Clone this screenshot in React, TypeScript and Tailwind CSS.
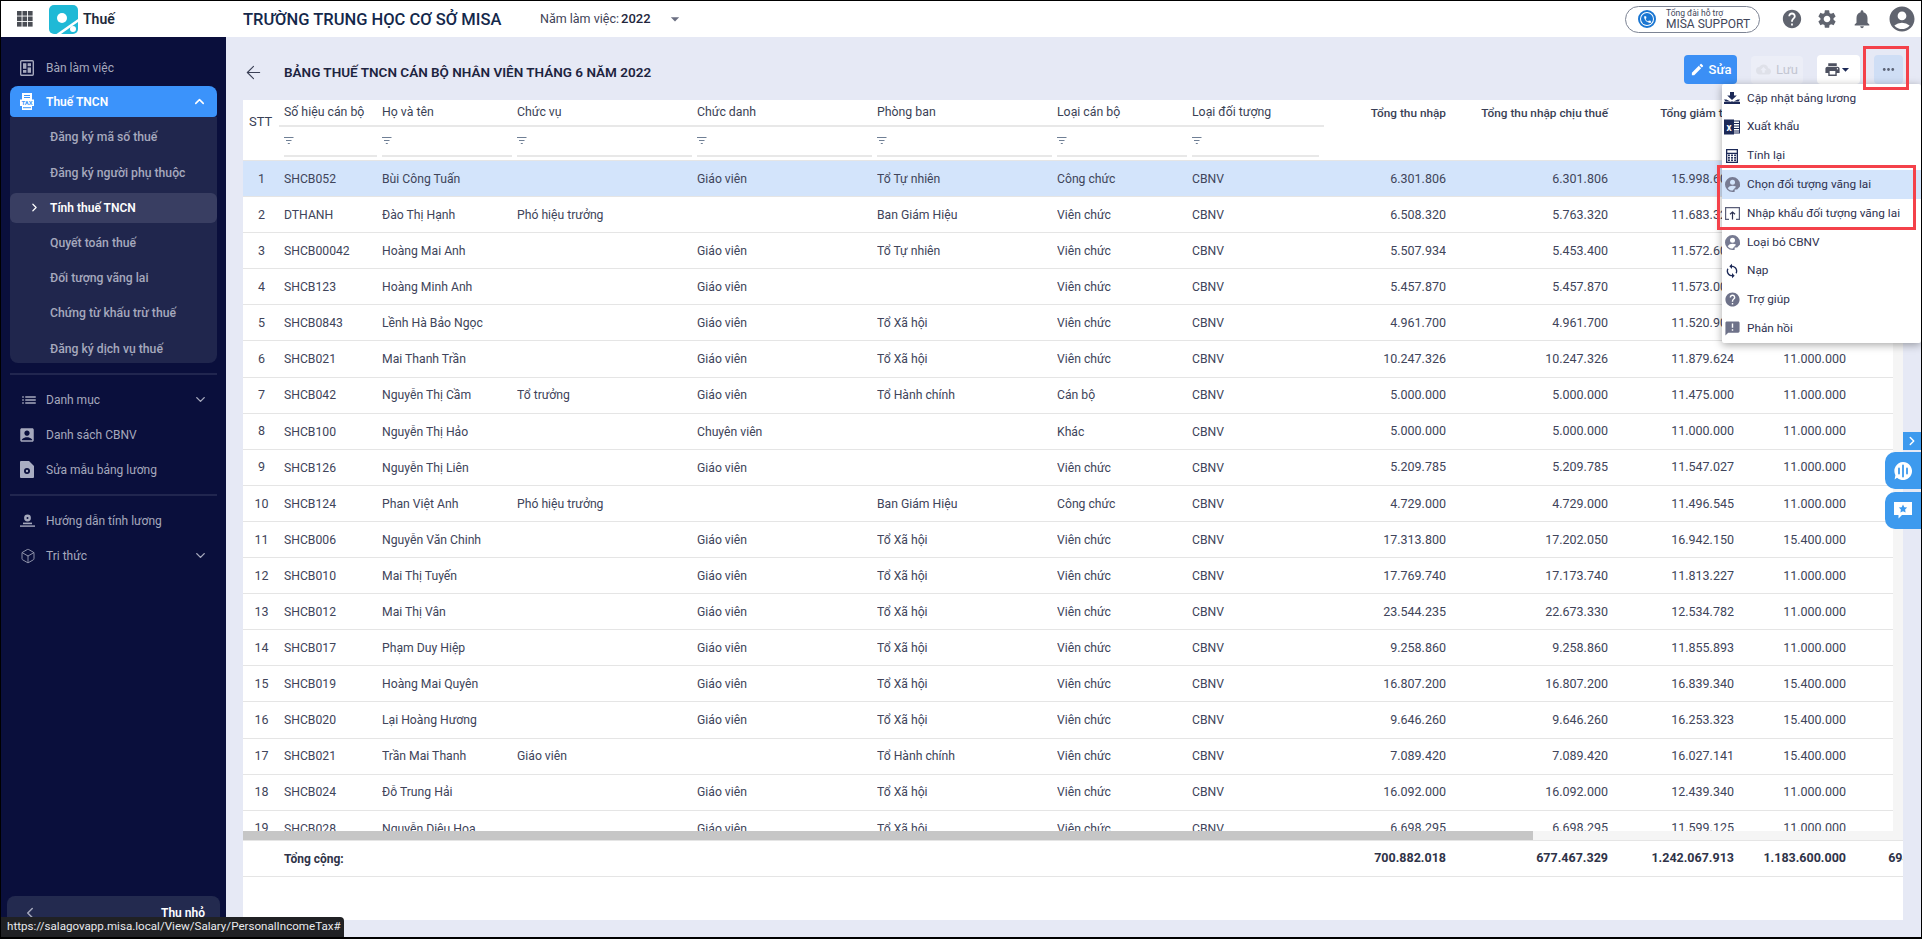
import React from "react";
import { ArrowLeft, Box, ChevronDown, ChevronLeft, ChevronRight, ChevronUp } from "lucide-react";
import {
  MdAccountBox,
  MdAccountCircle,
  MdEdit,
  MdHelp,
  MdList,
  MdMoreHoriz,
  MdNotifications,
  MdPhone,
  MdPrint,
  MdSettings,
  MdSync,
  MdAnnouncement,
  MdArrowDropDown,
  MdCloudUpload,
} from "react-icons/md";

const GRID =
  "grid grid-cols-[41px_98px_135px_180px_180px_180px_135px_132px_122px_162px_126px_112px_114px]";

type Row = [string, string, string, string, string, string, string, string, string, string, string];

const rows: Row[] = [
  ["SHCB052", "Bùi Công Tuấn", "", "Giáo viên", "Tổ Tự nhiên", "Công chức", "CBNV", "6.301.806", "6.301.806", "15.998.600", "15.400.000"],
  ["DTHANH", "Đào Thị Hạnh", "Phó hiệu trưởng", "", "Ban Giám Hiệu", "Viên chức", "CBNV", "6.508.320", "5.763.320", "11.683.320", "11.000.000"],
  ["SHCB00042", "Hoàng Mai Anh", "", "Giáo viên", "Tổ Tự nhiên", "Viên chức", "CBNV", "5.507.934", "5.453.400", "11.572.600", "11.000.000"],
  ["SHCB123", "Hoàng Minh Anh", "", "Giáo viên", "", "Viên chức", "CBNV", "5.457.870", "5.457.870", "11.573.000", "11.000.000"],
  ["SHCB0843", "Lềnh Hà Bảo Ngọc", "", "Giáo viên", "Tổ Xã hội", "Viên chức", "CBNV", "4.961.700", "4.961.700", "11.520.900", "11.000.000"],
  ["SHCB021", "Mai Thanh Trần", "", "Giáo viên", "Tổ Xã hội", "Viên chức", "CBNV", "10.247.326", "10.247.326", "11.879.624", "11.000.000"],
  ["SHCB042", "Nguyễn Thị Cầm", "Tổ trưởng", "Giáo viên", "Tổ Hành chính", "Cán bộ", "CBNV", "5.000.000", "5.000.000", "11.475.000", "11.000.000"],
  ["SHCB100", "Nguyễn Thị Hảo", "", "Chuyên viên", "", "Khác", "CBNV", "5.000.000", "5.000.000", "11.000.000", "11.000.000"],
  ["SHCB126", "Nguyễn Thị Liên", "", "Giáo viên", "", "Viên chức", "CBNV", "5.209.785", "5.209.785", "11.547.027", "11.000.000"],
  ["SHCB124", "Phan Việt Anh", "Phó hiệu trưởng", "", "Ban Giám Hiệu", "Công chức", "CBNV", "4.729.000", "4.729.000", "11.496.545", "11.000.000"],
  ["SHCB006", "Nguyễn Văn Chinh", "", "Giáo viên", "Tổ Xã hội", "Viên chức", "CBNV", "17.313.800", "17.202.050", "16.942.150", "15.400.000"],
  ["SHCB010", "Mai Thị Tuyến", "", "Giáo viên", "Tổ Xã hội", "Viên chức", "CBNV", "17.769.740", "17.173.740", "11.813.227", "11.000.000"],
  ["SHCB012", "Mai Thị Vân", "", "Giáo viên", "Tổ Xã hội", "Viên chức", "CBNV", "23.544.235", "22.673.330", "12.534.782", "11.000.000"],
  ["SHCB017", "Phạm Duy Hiệp", "", "Giáo viên", "Tổ Xã hội", "Viên chức", "CBNV", "9.258.860", "9.258.860", "11.855.893", "11.000.000"],
  ["SHCB019", "Hoàng Mai Quyên", "", "Giáo viên", "Tổ Xã hội", "Viên chức", "CBNV", "16.807.200", "16.807.200", "16.839.340", "15.400.000"],
  ["SHCB020", "Lại Hoàng Hương", "", "Giáo viên", "Tổ Xã hội", "Viên chức", "CBNV", "9.646.260", "9.646.260", "16.253.323", "15.400.000"],
  ["SHCB021", "Trần Mai Thanh", "Giáo viên", "", "Tổ Hành chính", "Viên chức", "CBNV", "7.089.420", "7.089.420", "16.027.141", "15.400.000"],
  ["SHCB024", "Đỗ Trung Hải", "", "Giáo viên", "Tổ Xã hội", "Viên chức", "CBNV", "16.092.000", "16.092.000", "12.439.340", "11.000.000"],
  ["SHCB028", "Nguyễn Diệu Hoa", "", "Giáo viên", "Tổ Xã hội", "Viên chức", "CBNV", "6.698.295", "6.698.295", "11.599.125", "11.000.000"],
];

const headCols = ["Số hiệu cán bộ", "Họ và tên", "Chức vụ", "Chức danh", "Phòng ban", "Loại cán bộ", "Loại đối tượng"];

const FilterIcon = () => (
  <svg width="10" height="8" viewBox="0 0 10 8" fill="none" stroke="#6f7f95" strokeWidth="1">
    <path d="M0 .5h9.500M2 3.500h5.500M3.800 6.500h2" />
  </svg>
);

const AppsIcon = () => (
  <svg width="16" height="16" viewBox="0 0 16 16" fill="#4a4d54">
    {[0, 5.5, 11].flatMap((y) =>
      [0, 5.5, 11].map((x) => <rect key={`${x}-${y}`} x={x} y={y} width="4.6" height="4.6" />)
    )}
  </svg>
);

const Logo = () => (
  <svg width="29" height="29" viewBox="0 0 29 29">
    <rect x="0" y="0" width="29" height="29" rx="5" fill="#1fb9d6" />
    <circle cx="13" cy="13" r="5" fill="#fff" />
    <path d="M29 14L29 17L12 29H7.500Z" fill="#fff" />
    <circle cx="24" cy="24" r="3" fill="#fff" />
  </svg>
);

const DashIcon = () => (
  <svg width="14" height="16" viewBox="0 0 14 16" fill="none">
    <rect x=".7" y=".7" width="12.600" height="14.600" rx="1" stroke="#a6a9bd" strokeWidth="1.400" />
    <rect x="3" y="3.200" width="3.400" height="5.600" fill="#a6a9bd" />
    <rect x="7.600" y="3.200" width="3.400" height="3" fill="#a6a9bd" />
    <rect x="7.600" y="7.400" width="3.400" height="5.400" fill="#a6a9bd" />
    <rect x="3" y="10" width="3.400" height="2.800" fill="#a6a9bd" />
  </svg>
);

const TaxIcon = () => (
  <svg width="14" height="17" viewBox="0 0 14 17">
    <rect x="2" y="0" width="10" height="17" fill="#fff" />
    <rect x="4" y="2" width="6" height="1" fill="#3d96fb" />
    <rect x="4" y="4" width="6" height="1" fill="#3d96fb" />
    <rect x="0" y="6.500" width="14" height="6.500" fill="#fff" />
    <text x="7" y="12" textAnchor="middle" fontSize="6" fontWeight="700" fill="#3d96fb" fontFamily="Roboto, sans-serif">
      TAX
    </text>
    <rect x="3" y="14.200" width="8" height="1" fill="#3d96fb" />
  </svg>
);

const TemplateIcon = () => (
  <svg width="14" height="17" viewBox="0 0 14 17">
    <path d="M1 0h8l5 5v11a1 1 0 0 1-1 1H1a1 1 0 0 1-1-1V1a1 1 0 0 1 1-1Z" fill="#a9adc2" />
    <circle cx="7" cy="10" r="3" fill="#0a0f3c" />
    <circle cx="7" cy="10" r="1.200" fill="#a9adc2" />
  </svg>
);

const GuideIcon = () => (
  <svg width="15" height="14" viewBox="0 0 15 14" fill="#a6a9bd">
    <circle cx="7.500" cy="4" r="3.400" />
    <rect x="3" y="8.600" width="9" height="1.600" />
    <rect x="0" y="11.400" width="15" height="1.400" />
    <circle cx="7.500" cy="4" r="1" fill="#0a0f3c" />
  </svg>
);

const DownloadTrayIcon = () => (
  <svg width="16" height="12" viewBox="0 0 16 12" fill="#1c2957">
    <path d="M6 0h4v3.500h2.800L8 8 3.200 3.500H6Z" />
    <path d="M0 7.500h2.400L8 10.200l5.600-2.700H16L14.500 9.500h-13Z" />
    <rect x="0" y="9.800" width="16" height="2.200" />
  </svg>
);

const ExcelIcon = () => (
  <svg width="16" height="16" viewBox="0 0 16 16">
    <rect x="6" y="2" width="9.500" height="12" fill="none" stroke="#1c2957" strokeWidth="1" />
    <path d="M9.500 4.500H15M9.500 7H15M9.500 9.500H15M9.500 12H15" stroke="#1c2957" strokeWidth="1" />
    <rect x="0" y="0.500" width="10" height="15" fill="#1c2957" />
    <text x="5" y="11.500" textAnchor="middle" fontSize="10" fontWeight="700" fill="#fff" fontFamily="Roboto, sans-serif">
      x
    </text>
  </svg>
);

const CalcIcon = () => (
  <svg width="12" height="14" viewBox="0 0 13 15" fill="#1c2957">
    <path d="M0 0h13v15H0Zm1.400 1.400v2.600h10.200V1.400ZM1.400 5.400v8.200h10.200V5.400Z" fillRule="evenodd" />
    {[5.9, 8.6, 11.2].flatMap((y) =>
      [2.2, 5.5, 8.8].map((x) => <rect key={`${x}-${y}`} x={x} y={y} width="2" height="1.800" />)
    )}
  </svg>
);

const PersonOffIcon = ({ cut = "#fff" }: { cut?: string }) => (
  <svg width="15" height="15" viewBox="0 0 15 15" fill="#777b92">
    <path d="M7.500 0a7.500 7.500 0 0 0 0 15c.8 0 1.500-.1 2.200-.3V12.500h2.500L15 9.500c.1-.6.100-1.300 0-2A7.500 7.500 0 0 0 7.500 0Z" />
    <circle cx="7.500" cy="5.300" r="2.500" fill={cut} />
    <path d="M2.800 11.300c.8-1.700 2.800-2.500 4.700-2.500 1.300 0 2.600.3 3.600.9l-2.800 3-.4.9C5.500 13.700 3.800 12.800 2.800 11.300Z" fill={cut} />
  </svg>
);

const ImportIcon = () => (
  <svg width="15" height="13" viewBox="0 0 15 13" fill="none" stroke="#5a5e78" strokeWidth="1.200">
    <path d="M4 12.300H.6V.7h13.800v11.600H11" />
    <path d="M7.500 12.500V5M5 7.300L7.500 5l2.500 2.300" stroke="#2b3050" />
  </svg>
);

const SideRow = ({ icon, label, chevron }: { icon: React.ReactNode; label: string; chevron?: boolean }) => (
  <div className="flex h-[35px] items-center pl-[19px] pr-[18px] text-[12px] text-[#a6a9bd]">
    <span className="flex w-[26px] shrink-0 items-center">{icon}</span>
    <span className="flex-1">{label}</span>
    {chevron && <ChevronDown size={15} strokeWidth={2.25} />}
  </div>
);

const SubRow = ({ label }: { label: string }) => (
  <div className="flex h-[35.2px] shrink-0 items-center pl-[40px] text-[12.200px] font-medium text-[#a6a9bd]">{label}</div>
);

const MenuRow = ({ icon, label, active }: { icon: React.ReactNode; label: string; active?: boolean }) => (
  <div className={`flex h-[28.8px] items-center whitespace-nowrap text-[11.800px] text-[#2e3150] ${active ? "bg-[#d3e4fb]" : ""}`}>
    <span className="flex w-[25px] shrink-0 items-center justify-center pr-[5px]">{icon}</span>
    <span>{label}</span>
  </div>
);

export default function App() {
  return (
    <div className="relative flex h-[939px] w-full flex-col overflow-hidden border-t border-r border-l border-b-2 border-black bg-[#e6e9f5] font-['Roboto',sans-serif] text-[12px]">
      {/* top bar */}
      <header className="flex h-[36px] shrink-0 items-center whitespace-nowrap bg-white">
        <span className="ml-[16px] flex w-[32px] shrink-0"><AppsIcon /></span>
        <Logo />
        <span className="ml-[5px] w-[160px] shrink-0 text-[14px] font-semibold text-[#1d2a3a]">Thuế</span>
        <span className="w-[297px] shrink-0 pt-[2px] text-[16.500px] font-medium text-[#14284b]">TRƯỜNG TRUNG HỌC CƠ SỞ MISA</span>
        <span className="w-[81px] shrink-0 text-[12.500px] text-[#3f4358]">Năm làm việc:</span>
        <span className="w-[44px] shrink-0 text-[13px] font-medium text-[#22263c]">2022</span>
        <MdArrowDropDown size={20} className="text-[#6b6f82]" />
        <div className="ml-auto flex items-center">
          <div className="flex h-[27px] w-[135px] items-center rounded-full border border-[#7d8494] pl-[12px]">
            <span className="flex h-[18px] w-[18px] items-center justify-center rounded-full border-[2px] border-[#1a76d2] bg-white">
              <span className="flex h-[12px] w-[12px] items-center justify-center rounded-full bg-[#1a76d2]">
                <MdPhone size={9} color="#fff" />
              </span>
            </span>
            <div className="ml-[10px] flex flex-col leading-none text-[#41465a]">
              <span className="text-[8.500px] leading-[10px]">Tổng đài hỗ trợ</span>
              <span className="text-[12px] leading-[13px]">MISA SUPPORT</span>
            </div>
          </div>
          <div className="ml-[21px] flex items-center gap-[13px] text-[#60646f]">
            <MdHelp size={22} />
            <MdSettings size={22} />
            <MdNotifications size={22} />
          </div>
          <MdAccountCircle size={30} className="ml-[14px] mr-[4px] text-[#60646f]" />
        </div>
      </header>

      <div className="flex min-h-0 flex-1">
        {/* sidebar */}
        <aside className="flex w-[225px] shrink-0 flex-col whitespace-nowrap bg-[#0a0f3c] px-[9px] pt-[13px]">
          <div className="-mx-[9px]">
            <SideRow icon={<DashIcon />} label="Bàn làm việc" />
          </div>
          <div className="mt-[1px] flex h-[31px] items-center rounded-t-[8px] rounded-b-[4px] bg-[#3b93fb] pl-[10px] pr-[10px] text-[12px] font-semibold text-white">
            <span className="flex w-[26px]"><TaxIcon /></span>
            <span className="flex-1">Thuế TNCN</span>
            <ChevronUp size={15} strokeWidth={2.5} />
          </div>
          <div className="flex h-[246px] flex-col rounded-b-[8px] bg-[#20264d] pt-[3px]">
            <SubRow label="Đăng ký mã số thuế" />
            <SubRow label="Đăng ký người phụ thuộc" />
            <div className="my-[2.600px] flex h-[30px] shrink-0 items-center rounded-[6px] bg-[#393e62] pl-[18px] text-[12px] font-semibold text-white">
              <ChevronRight size={13} strokeWidth={2.25} className="mr-[9px]" />
              Tính thuế TNCN
            </div>
            <SubRow label="Quyết toán thuế" />
            <SubRow label="Đối tượng vãng lai" />
            <SubRow label="Chứng từ khấu trừ thuế" />
            <SubRow label="Đăng ký dịch vụ thuế" />
          </div>
          <div className="mt-[10px] h-[2px] bg-[#21264f]" />
          <div className="-mx-[9px] mt-[7px]">
            <SideRow icon={<MdList size={18} />} label="Danh mục" chevron />
            <SideRow icon={<MdAccountBox size={18} className="-ml-[2px]" />} label="Danh sách CBNV" />
            <SideRow icon={<TemplateIcon />} label="Sửa mẫu bảng lương" />
          </div>
          <div className="mt-[7px] h-[2px] bg-[#21264f]" />
          <div className="-mx-[9px] mt-[7px]">
            <SideRow icon={<GuideIcon />} label="Hướng dẫn tính lương" />
            <SideRow icon={<Box size={16} strokeWidth={1.25} />} label="Tri thức" chevron />
          </div>
          <div className="-mx-[3px] mt-auto flex h-[41px] items-start justify-between rounded-t-[8px] bg-[#232a4f] pl-[14px] pr-[15px] pt-[8px]">
            <ChevronLeft size={18} className="text-[#a6a9bd]" />
            <span className="text-[12px] font-semibold text-white">Thu nhỏ</span>
          </div>
        </aside>

        {/* content */}
        <main className="flex min-w-0 flex-1 flex-col pl-[17px] pr-[18px] pt-[18px]">
          <div className="flex h-[29px] shrink-0 items-center">
            <ArrowLeft size={21} strokeWidth={1.25} className="mt-[5px] text-[#3a3f55]" />
            <h1 className="ml-[20px] mt-[6px] text-[13.500px] font-semibold text-[#1d2440]">
              BẢNG THUẾ TNCN CÁN BỘ NHÂN VIÊN THÁNG 6 NĂM 2022
            </h1>
            <div className="ml-auto flex items-center">
              <button className="flex h-[29px] w-[53px] items-center justify-center gap-[4px] rounded-[4px] bg-[#3b8ff5] text-[13px] font-medium text-white">
                <MdEdit size={15} />
                Sửa
              </button>
              <button className="ml-[14px] flex h-[28px] w-[52px] items-center justify-center gap-[5px] rounded-[4px] bg-[#eceef7] text-[13px] text-[#c3c6d2]">
                <MdCloudUpload size={15} className="text-[#dfe1e9]" />
                Lưu
              </button>
              <button className="ml-[14px] flex h-[29px] w-[43px] items-center justify-center rounded-[4px] bg-white text-[#4d5160]">
                <MdPrint size={17} />
                <MdArrowDropDown size={17} className="-ml-[4px] text-[#1c2957]" />
              </button>
              <button className="ml-[14px] flex h-[29px] w-[29px] items-center justify-center rounded-[4px] bg-[#cfdef5] text-[#5c6477]">
                <MdMoreHoriz size={17} />
              </button>
            </div>
          </div>

          {/* table */}
          <div className="mt-[16px] flex h-[820px] flex-col overflow-hidden bg-white text-[12.500px] text-[#40445a]">
            <div className="h-[61px] shrink-0 border-b border-[#e5e5e5]">
              <div className={`${GRID} w-max grid-rows-[27px_30px]`}>
                <div className="row-span-2 flex h-[44px] items-center pl-[6px] text-[13px] text-[#3a3f55]">STT</div>
                <div className="col-span-7 -ml-[5px] grid grid-cols-subgrid items-center border-b-2 border-[#e8e8e8] text-[12.300px] text-[#3a3f55]">
                  {headCols.map((h, i) => (
                    <span key={h} className={i === 0 ? "pl-[5px]" : ""}>{h}</span>
                  ))}
                </div>
                <div className="col-start-9 flex items-center justify-end text-[11.800px] font-medium text-[#3a3f55]">Tổng thu nhập</div>
                <div className="flex items-center justify-end text-[11.800px] font-medium text-[#3a3f55]">Tổng thu nhập chịu thuế</div>
                <div className="flex items-center justify-end text-[11.800px] font-medium text-[#3a3f55]">Tổng giảm trừ</div>
                <div className="col-start-2 col-span-7 grid grid-cols-subgrid">
                  {headCols.map((h) => (
                    <div key={h} className="mr-[5px] flex items-center border-b-2 border-[#e8e8e8]">
                      <FilterIcon />
                    </div>
                  ))}
                </div>
              </div>
            </div>
            <div className="flex min-h-0 flex-1 flex-col">
              <div className="flex h-[679px] shrink-0">
                <div className="flex w-[1650px] shrink-0 flex-col overflow-hidden">
                  <div className="flex h-[670px] shrink-0 flex-col overflow-hidden">
                    {rows.map((r, i) => (
                      <div
                        key={i}
                        className={`${GRID} h-[36.100px] w-max shrink-0 items-center border-b border-[#e5e5e5] pt-[1px] ${i === 0 ? "bg-[#d3e4fb]" : ""}`}
                      >
                        <div className="pr-[4px] text-center">{i + 1}</div>
                        {r.slice(0, 7).map((c, j) => (
                          <div key={j} className="truncate text-[12.200px]">{c}</div>
                        ))}
                        {r.slice(7).map((c, j) => (
                          <div key={j} className="truncate pl-[1px] text-right">{c}</div>
                        ))}
                      </div>
                    ))}
                  </div>
                  <div className="h-[9px] shrink-0 bg-[#f5f5f5]">
                    <div className="h-full w-[1290px] bg-[#c6c6c6]" />
                  </div>
                </div>
                <div className="flex-1 bg-[#f5f5f5]" />
              </div>
              <div className={`${GRID} h-[37px] w-max shrink-0 items-center border-y border-[#e5e5e5] font-bold text-[#2f3348]`}>
                <div />
                <div className="col-span-3 text-[12px]">Tổng cộng:</div>
                <div className="col-start-9 text-right">700.882.018</div>
                <div className="text-right">677.467.329</div>
                <div className="text-right">1.242.067.913</div>
                <div className="text-right">1.183.600.000</div>
                <div className="text-right">694.214.000</div>
              </div>
            </div>
          </div>
        </main>
      </div>

      {/* action dropdown */}
      <div className="absolute left-[1721px] top-[83px] w-[199px] rounded-[2px] bg-white shadow-[0_2px_8px_rgba(0,0,0,0.35)]">
        <MenuRow icon={<DownloadTrayIcon />} label="Cập nhật bảng lương" />
        <MenuRow icon={<ExcelIcon />} label="Xuất khẩu" />
        <MenuRow icon={<CalcIcon />} label="Tính lại" />
        <MenuRow icon={<PersonOffIcon cut="#d3e4fb" />} label="Chọn đối tượng vãng lai" active />
        <MenuRow icon={<ImportIcon />} label="Nhập khẩu đối tượng vãng lai" />
        <MenuRow icon={<PersonOffIcon />} label="Loại bỏ CBNV" />
        <MenuRow icon={<MdSync size={16} color="#1c2957" />} label="Nạp" />
        <MenuRow icon={<MdHelp size={17} color="#6e7289" />} label="Trợ giúp" />
        <MenuRow icon={<MdAnnouncement size={17} color="#6e7289" />} label="Phản hồi" />
      </div>

      {/* red annotations */}
      <div className="absolute left-[1862px] top-[45px] h-[44px] w-[46px] border-[3px] border-[#f4414a]" />
      <div className="absolute left-[1716px] top-[164px] h-[65px] w-[199px] border-[3px] border-[#f4414a]" />

      {/* floating side buttons */}
      <div className="absolute right-0 top-[431px] flex h-[18px] w-[18px] items-center justify-center bg-[#3d9aee] text-white">
        <ChevronRight size={14} strokeWidth={2.5} />
      </div>
      <div className="absolute right-0 top-[451px] flex h-[37px] w-[36px] items-center justify-center rounded-l-[10px] bg-[#3d9aee]">
        <svg width="18" height="18" viewBox="0 0 18 18">
          <path d="M9 0a9 9 0 1 1-6 15.700L.6 17.500l.8-4.300A9 9 0 0 1 9 0Z" fill="#fff" />
          <path d="M5 6.500v5M9 3.500v11M13 6.500v5" stroke="#3d9aee" strokeWidth="1.800" strokeLinecap="round" />
        </svg>
      </div>
      <div className="absolute right-0 top-[491px] flex h-[37px] w-[36px] items-center justify-center rounded-l-[10px] bg-[#3d9aee]">
        <svg width="18" height="17" viewBox="0 0 18 17">
          <path d="M0 0h18v13H8l-3.500 3.500V13H0Z" fill="#fff" />
          <path d="M9 2.500l1.300 2.700 2.900.4-2.100 2 .5 2.900L9 9.200l-2.600 1.300.5-2.900-2.100-2 2.900-.4Z" fill="#3d9aee" />
        </svg>
      </div>

      {/* browser status bubble */}
      <div className="absolute bottom-0 left-0 flex h-[20px] w-[343px] items-center whitespace-nowrap rounded-tr-[4px] bg-[#202124] pl-[6px] text-[11.600px] text-[#e8eaed]">
        https://salagovapp.misa.local/View/Salary/PersonalIncomeTax#
      </div>
    </div>
  );
}
